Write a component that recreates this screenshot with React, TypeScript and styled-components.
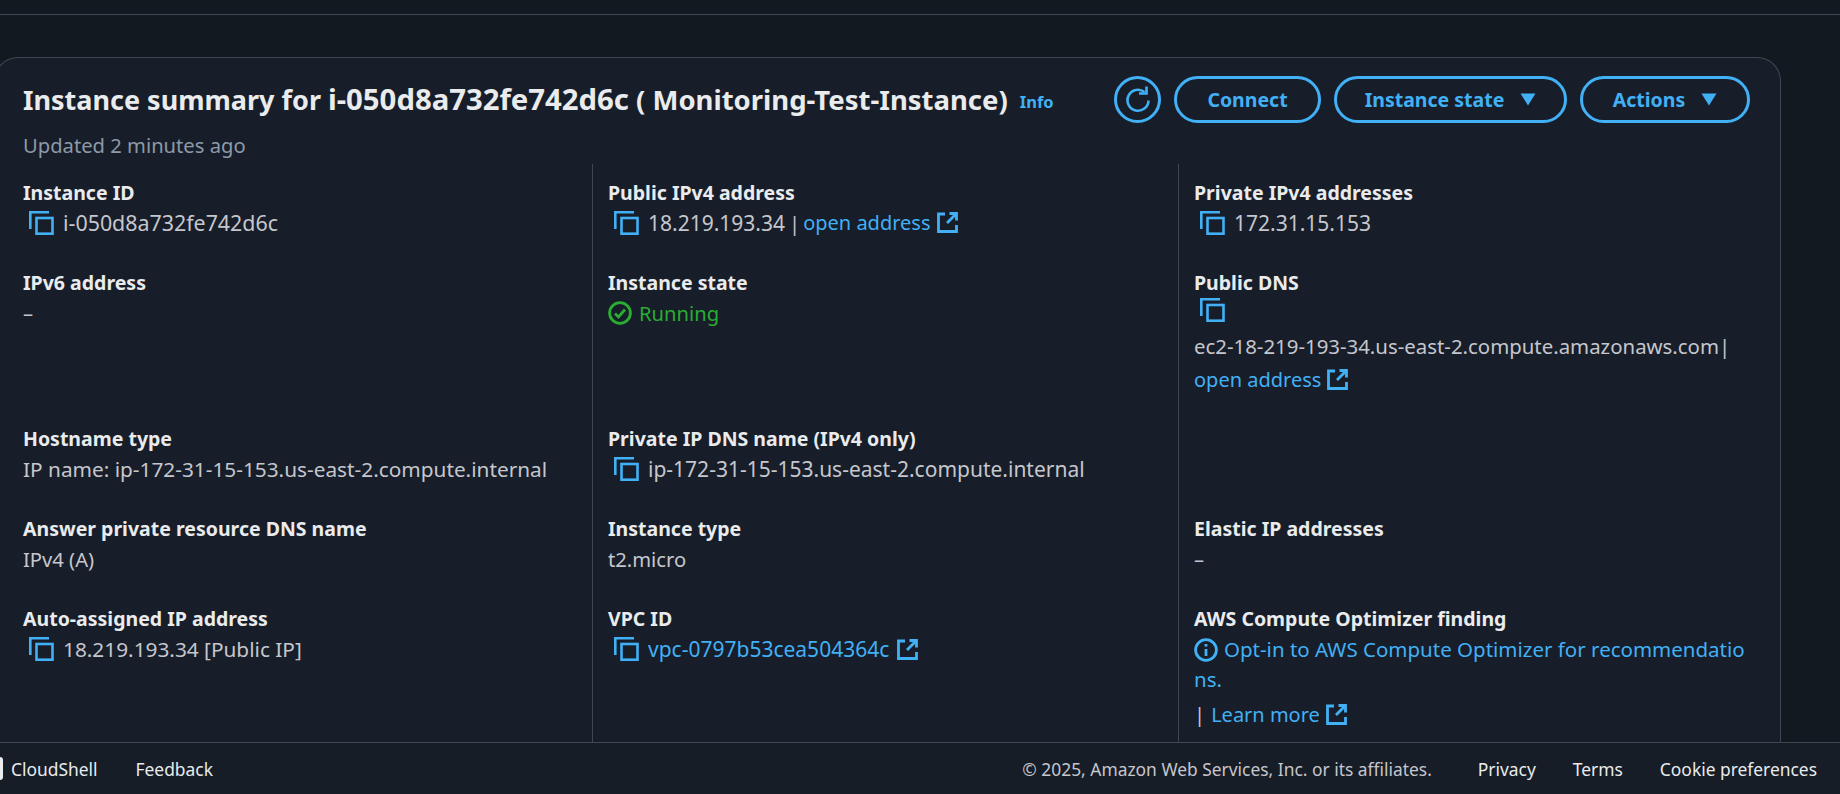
import React from "react";
import styled, { createGlobalStyle } from "styled-components";

const GlobalStyle = createGlobalStyle`
  html, body {
    margin: 0;
    padding: 0;
    height: 100%;
    overflow: hidden;
    background: #131921;
  }
  #root {
    height: 100%;
  }
`;

const colors = {
  link: "#42b0f5",
  label: "#e9ebed",
  value: "#c6c6cd",
  muted: "#8d99a8",
  green: "#29ad32",
  line: "#414750",
  card: "#171e29",
};

const Page = styled.div`
  height: 794px;
  display: flex;
  flex-direction: column;
  font-family: "Noto Sans", sans-serif;
  font-size: 20.2px;
  line-height: 30px;
  color: ${colors.value};
  overflow: hidden;
`;

const TopBar = styled.div`
  height: 14px;
  flex: none;
  border-bottom: 1px solid ${colors.line};
`;

const Content = styled.main`
  flex: 1;
  min-height: 0;
  padding: 42px 59px 0 0;
  overflow: hidden;
`;

const Card = styled.section`
  margin-left: -6px;
  height: 100%;
  box-sizing: border-box;
  background: ${colors.card};
  border: 1px solid ${colors.line};
  border-bottom: none;
  border-radius: 24px 24px 0 0;
  padding: 18px 30px 0 28px;
  display: flex;
  flex-direction: column;
`;

const Header = styled.header`
  display: flex;
  justify-content: space-between;
  align-items: center;
  height: 47px;
  flex: none;
`;

const TitleRow = styled.div`
  display: flex;
  align-items: center;
  gap: 12px;
`;

const Title = styled.h1`
  margin: 0;
  font-size: 27px;
  line-height: 36px;
  font-weight: 700;
  color: ${colors.label};
`;

const TitleId = styled.span`
  font-size: 29.3px;
`;

const TitleName = styled.span`
  font-size: 27.5px;
`;

const Info = styled.a`
  font-size: 16.5px;
  font-weight: 700;
  color: ${colors.link};
  margin-top: 4px;
`;

const Actions = styled.div`
  display: flex;
  gap: 13px;
  align-items: center;
`;

const PillButton = styled.button<{ $width: number }>`
  width: ${(p) => p.$width}px;
  height: 47px;
  box-sizing: border-box;
  border: 3px solid ${colors.link};
  border-radius: 24px;
  background: transparent;
  color: ${colors.link};
  font-family: inherit;
  font-size: 19.5px;
  font-weight: 700;
  display: flex;
  align-items: center;
  justify-content: center;
  gap: 16px;
  padding: 0;
`;

const RoundButton = styled(PillButton)`
  border-radius: 50%;
`;

const Updated = styled.div`
  color: ${colors.muted};
  font-size: 20.2px;
  margin-top: 7px;
  height: 34px;
  flex: none;
`;

const Grid = styled.div`
  flex: 1;
  min-height: 0;
  display: grid;
  grid-template-columns: 569px 586px 1fr;
  grid-template-rows: 90px 156px 90px 90px 1fr;
`;

const Cell = styled.div<{ $col: number }>`
  box-sizing: border-box;
  padding: 14px 0 0 ${(p) => (p.$col === 0 ? 0 : 15)}px;
  border-left: ${(p) => (p.$col === 0 ? "none" : `1px solid ${colors.line}`)};
  min-width: 0;
`;

const Label = styled.div`
  font-size: 19.5px;
  font-weight: 700;
  color: ${colors.label};
`;

const Value = styled.div`
  display: flex;
  align-items: center;
  white-space: nowrap;
`;

const Numeric = styled.span<{ $size?: number }>`
  font-size: ${(p) => p.$size ?? 21}px;
`;

const CopyWrap = styled.span`
  display: inline-flex;
  flex: none;
  margin: 0 9px 0 6px;
`;

const Link = styled.a<{ $size?: number }>`
  color: ${colors.link};
  font-size: ${(p) => p.$size ?? 20}px;
`;

const ExtWrap = styled.span<{ $gap?: number }>`
  display: inline-flex;
  margin-left: ${(p) => p.$gap ?? 6}px;
  vertical-align: -3px;
`;

const Sep = styled.span`
  margin: 0 3px 0 4px;
`;

const Running = styled.div`
  display: flex;
  align-items: center;
  gap: 7px;
  color: ${colors.green};
`;

const DnsName = styled.div`
  margin-top: 7px;
  line-height: 35px;
  font-size: 20.4px;
  white-space: nowrap;
`;

const OptIn = styled.div`
  color: ${colors.link};
  font-size: 20.5px;
  word-break: break-all;
  line-height: 30px;
`;

const LearnMore = styled.div`
  margin-top: 5px;
`;

const LearnSep = styled.span`
  margin-right: 6px;
`;

const Footer = styled.footer`
  height: 51px;
  flex: none;
  border-top: 1px solid ${colors.line};
  background: #161d26;
  display: flex;
  align-items: center;
  justify-content: space-between;
  padding: 0 23px 0 0;
  font-size: 17.4px;
  color: #e9ebed;
`;

const FooterGroup = styled.div`
  display: flex;
  align-items: center;
  gap: 37px;
`;

const CloudShell = styled.span`
  display: flex;
  align-items: center;
  gap: 8px;
  margin-right: 1px;
`;

const ShellTab = styled.span`
  width: 3px;
  height: 23px;
  background: #e9ebed;
  border-radius: 0 4px 4px 0;
`;

const Copyright = styled.span`
  color: ${colors.value};
  margin-right: 9px;
`;

const CopyIcon = () => (
  <CopyWrap>
    <svg width="25" height="24" viewBox="0 0 25 24" fill="none" stroke={colors.link} strokeWidth="2.6">
      <path d="M1.3 18V1.3H20" />
      <rect x="7.5" y="7" width="16" height="15.7" />
    </svg>
  </CopyWrap>
);

const ExternalIcon = ({ gap }: { gap?: number }) => (
  <ExtWrap $gap={gap}>
    <svg width="21" height="21" viewBox="0 0 21 21" fill="none" stroke={colors.link} strokeWidth="2.8">
      <path d="M8 2H1.5V19.5H19.5V13" />
      <path d="M12.5 1.5H19.5V8.5" />
      <path d="M19 2L10 11" />
    </svg>
  </ExtWrap>
);

const RefreshIcon = () => (
  <svg width="26" height="28" viewBox="0 0 26 28" fill="none" stroke={colors.link} strokeWidth="2.6">
    <path d="M19.5 6A10.5 10.5 0 1 0 23.5 14.5" />
    <path d="M21.5 0.5V7.5H14" />
  </svg>
);

const CaretDown = () => (
  <svg width="16" height="13" viewBox="0 0 16 13">
    <path d="M0.5 0.5H15.5L8 12.5Z" fill={colors.link} />
  </svg>
);

const CheckCircle = () => (
  <svg width="24" height="24" viewBox="0 0 24 24" fill="none" stroke={colors.green} strokeWidth="2.8">
    <circle cx="12" cy="12" r="10.4" />
    <path d="M7 12.5L10.5 16L17 8.5" />
  </svg>
);

const InfoIcon = styled.svg`
  vertical-align: -5px;
  margin-right: 6px;
`;

const InfoCircle = () => (
  <InfoIcon width="24" height="24" viewBox="0 0 24 24" fill="none" stroke={colors.link} strokeWidth="2.8">
    <circle cx="12" cy="12" r="10.4" />
    <path d="M12 11V18" />
    <path d="M12 6V8.6" />
  </InfoIcon>
);

const OpenAddress = ({ text = "open address", size, gap }: { text?: string; size?: number; gap?: number }) => (
  <Link $size={size}>
    {text}
    <ExternalIcon gap={gap} />
  </Link>
);

export default function App() {
  return (
    <>
      <GlobalStyle />
      <Page>
        <TopBar />
        <Content>
          <Card>
            <Header>
              <TitleRow>
                <Title>
                  Instance summary for <TitleId>i-050d8a732fe742d6c</TitleId>{" "}
                  <TitleName>( Monitoring-Test-Instance)</TitleName>
                </Title>
                <Info>Info</Info>
              </TitleRow>
              <Actions>
                <RoundButton $width={47}>
                  <RefreshIcon />
                </RoundButton>
                <PillButton $width={147}>Connect</PillButton>
                <PillButton $width={233}>
                  Instance state <CaretDown />
                </PillButton>
                <PillButton $width={170}>
                  Actions <CaretDown />
                </PillButton>
              </Actions>
            </Header>
            <Updated>Updated 2 minutes ago</Updated>
            <Grid>
              <Cell $col={0}>
                <Label>Instance ID</Label>
                <Value>
                  <CopyIcon />
                  <Numeric $size={21.4}>i-050d8a732fe742d6c</Numeric>
                </Value>
              </Cell>
              <Cell $col={1}>
                <Label>Public IPv4 address</Label>
                <Value>
                  <CopyIcon />
                  <Numeric>18.219.193.34</Numeric>
                  <Sep>|</Sep>
                  <OpenAddress />
                </Value>
              </Cell>
              <Cell $col={2}>
                <Label>Private IPv4 addresses</Label>
                <Value>
                  <CopyIcon />
                  <Numeric>172.31.15.153</Numeric>
                </Value>
              </Cell>

              <Cell $col={0}>
                <Label>IPv6 address</Label>
                <div>–</div>
              </Cell>
              <Cell $col={1}>
                <Label>Instance state</Label>
                <Running>
                  <CheckCircle />
                  Running
                </Running>
              </Cell>
              <Cell $col={2}>
                <Label>Public DNS</Label>
                <Value>
                  <CopyIcon />
                </Value>
                <DnsName>ec2-18-219-193-34.us-east-2.compute.amazonaws.com|</DnsName>
                <OpenAddress />
              </Cell>

              <Cell $col={0}>
                <Label>Hostname type</Label>
                <Numeric $size={20.8}>IP name: ip-172-31-15-153.us-east-2.compute.internal</Numeric>
              </Cell>
              <Cell $col={1}>
                <Label>Private IP DNS name (IPv4 only)</Label>
                <Value>
                  <CopyIcon />
                  <Numeric>ip-172-31-15-153.us-east-2.compute.internal</Numeric>
                </Value>
              </Cell>
              <Cell $col={2} />

              <Cell $col={0}>
                <Label>Answer private resource DNS name</Label>
                <div>IPv4 (A)</div>
              </Cell>
              <Cell $col={1}>
                <Label>Instance type</Label>
                <div>t2.micro</div>
              </Cell>
              <Cell $col={2}>
                <Label>Elastic IP addresses</Label>
                <div>–</div>
              </Cell>

              <Cell $col={0}>
                <Label>Auto-assigned IP address</Label>
                <Value>
                  <CopyIcon />
                  <Numeric $size={20.8}>18.219.193.34 [Public IP]</Numeric>
                </Value>
              </Cell>
              <Cell $col={1}>
                <Label>VPC ID</Label>
                <Value>
                  <CopyIcon />
                  <OpenAddress text="vpc-0797b53cea504364c" size={21} gap={8} />
                </Value>
              </Cell>
              <Cell $col={2}>
                <Label>AWS Compute Optimizer finding</Label>
                <OptIn>
                  <InfoCircle />
                  Opt-in to AWS Compute Optimizer for recommendations.
                </OptIn>
                <LearnMore>
                  <LearnSep>|</LearnSep>
                  <OpenAddress text="Learn more" />
                </LearnMore>
              </Cell>
            </Grid>
          </Card>
        </Content>
        <Footer>
          <FooterGroup>
            <CloudShell>
              <ShellTab />
              CloudShell
            </CloudShell>
            <span>Feedback</span>
          </FooterGroup>
          <FooterGroup>
            <Copyright>© 2025, Amazon Web Services, Inc. or its affiliates.</Copyright>
            <span>Privacy</span>
            <span>Terms</span>
            <span>Cookie preferences</span>
          </FooterGroup>
        </Footer>
      </Page>
    </>
  );
}
